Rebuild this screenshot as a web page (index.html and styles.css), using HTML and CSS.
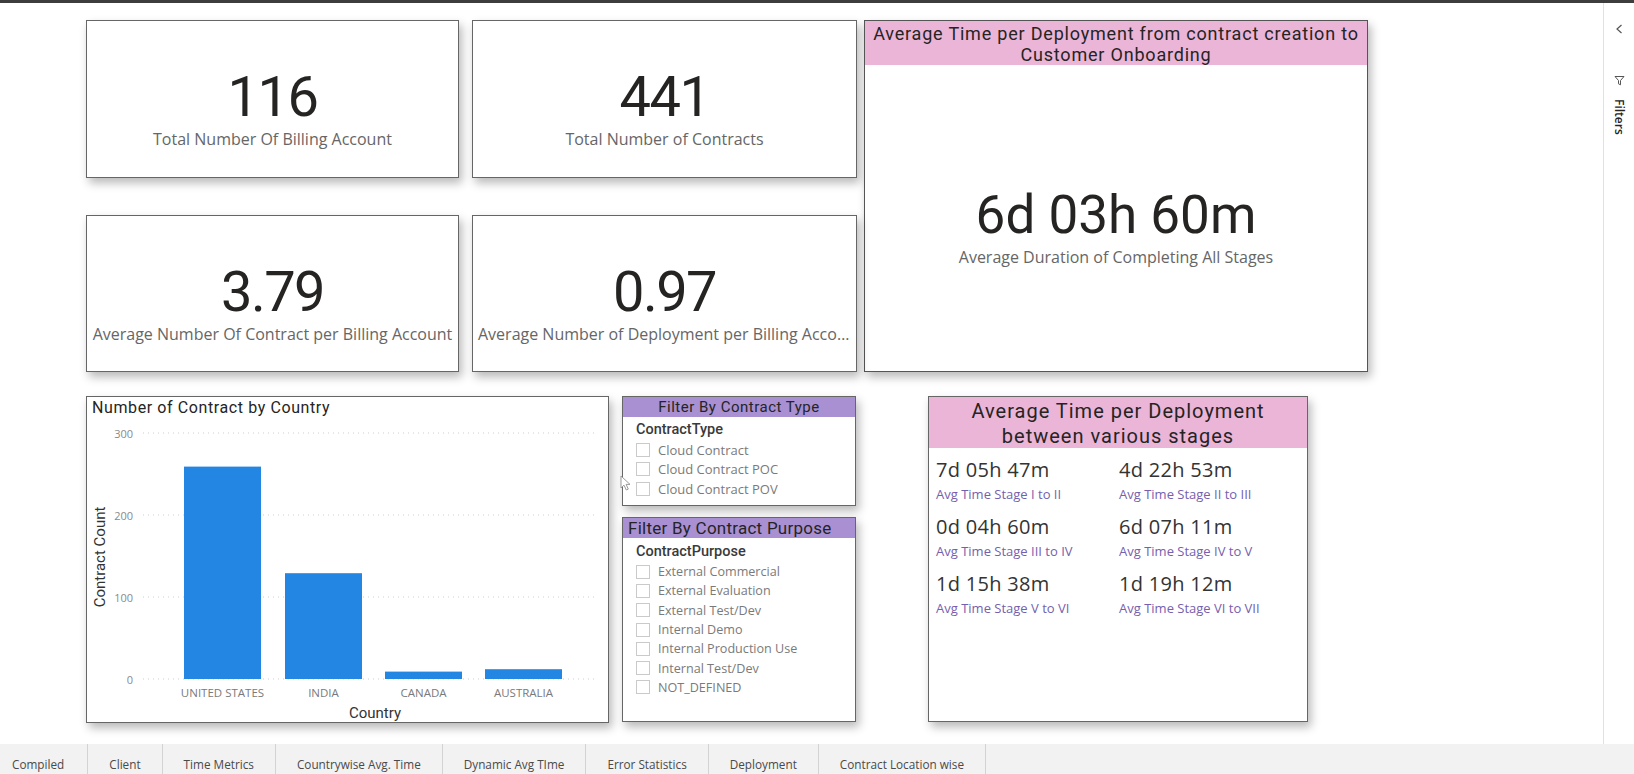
FILE: index.html
```html
<!DOCTYPE html>
<html lang="en">
<head>
<meta charset="utf-8">
<title>Contracts Dashboard</title>
<link rel="stylesheet" href="styles.css">
</head>
<body>
<div class="topbar"></div>
<div class="main">
  <div class="canvas">
    <div class="top-grid">
      <div class="card kpi">
        <div class="kpi-value">116</div>
        <div class="kpi-label">Total Number Of Billing Account</div>
      </div>
      <div class="card kpi">
        <div class="kpi-value">441</div>
        <div class="kpi-label">Total Number of Contracts</div>
      </div>
      <div class="card big">
        <div class="big-head">Average Time per Deployment from contract creation to Customer Onboarding</div>
        <div class="big-body">
          <div class="big-value">6d 03h 60m</div>
          <div class="kpi-label">Average Duration of Completing All Stages</div>
        </div>
      </div>
      <div class="card kpi">
        <div class="kpi-value">3.79</div>
        <div class="kpi-label">Average Number Of Contract per Billing Account</div>
      </div>
      <div class="card kpi">
        <div class="kpi-value">0.97</div>
        <div class="kpi-label">Average Number of Deployment per Billing Account</div>
      </div>
    </div>

    <div class="bottom-row">
      <div class="card chart">
        <div class="chart-title">Number of Contract by Country</div>
        <svg class="chart-svg" width="521" height="303" viewBox="0 0 521 303">
          <g class="grid">
            <line x1="56" y1="14" x2="510" y2="14"/>
            <line x1="56" y1="96" x2="510" y2="96"/>
            <line x1="56" y1="178" x2="510" y2="178"/>
            <line x1="56" y1="260" x2="510" y2="260"/>
          </g>
          <g class="ytick">
            <text x="46" y="14">300</text>
            <text x="46" y="96">200</text>
            <text x="46" y="178">100</text>
            <text x="46" y="260">0</text>
          </g>
          <g class="bars">
            <rect x="97" y="47.6" width="77" height="212.4"/>
            <rect x="198" y="154.2" width="77" height="105.8"/>
            <rect x="298" y="252.6" width="77" height="7.4"/>
            <rect x="398" y="250.2" width="77" height="9.8"/>
          </g>
          <g class="xtick">
            <text x="135.5" y="273">UNITED STATES</text>
            <text x="236.5" y="273">INDIA</text>
            <text x="336.5" y="273">CANADA</text>
            <text x="436.5" y="273">AUSTRALIA</text>
          </g>
          <text class="axis-title" x="288" y="294">Country</text>
          <text class="axis-title" x="13" y="138" transform="rotate(-90 13 138)">Contract Count</text>
        </svg>
      </div>

      <div class="filters">
        <div class="card slicer slicer-type">
          <div class="fhead">Filter By Contract Type</div>
          <div class="ftitle">ContractType</div>
          <div class="fitem"><span class="cb"></span>Cloud Contract</div>
          <div class="fitem"><span class="cb"></span>Cloud Contract POC</div>
          <div class="fitem"><span class="cb"></span>Cloud Contract POV</div>
          <svg class="cursor" width="12" height="16" viewBox="0 0 12 16"><path d="M1 1 L1 13 L4 10.2 L6.3 15 L8.3 14.1 L6.1 9.4 L10 9.4 Z"/></svg>
        </div>
        <div class="card slicer slicer-purpose">
          <div class="fhead fhead-left">Filter By Contract Purpose</div>
          <div class="ftitle ftitle-purpose">ContractPurpose</div>
          <div class="fitem fitem-tight"><span class="cb"></span>External Commercial</div>
          <div class="fitem fitem-tight"><span class="cb"></span>External Evaluation</div>
          <div class="fitem fitem-tight"><span class="cb"></span>External Test/Dev</div>
          <div class="fitem fitem-tight"><span class="cb"></span>Internal Demo</div>
          <div class="fitem fitem-tight"><span class="cb"></span>Internal Production Use</div>
          <div class="fitem fitem-tight"><span class="cb"></span>Internal Test/Dev</div>
          <div class="fitem fitem-tight"><span class="cb"></span>NOT_DEFINED</div>
        </div>
      </div>

      <div class="card stages">
        <div class="shead">Average Time per Deployment between various stages</div>
        <div class="sgrid">
          <div class="scell"><div class="sval">7d 05h 47m</div><div class="slab">Avg Time Stage I to II</div></div>
          <div class="scell"><div class="sval">4d 22h 53m</div><div class="slab">Avg Time Stage II to III</div></div>
          <div class="scell"><div class="sval">0d 04h 60m</div><div class="slab">Avg Time Stage III to IV</div></div>
          <div class="scell"><div class="sval">6d 07h 11m</div><div class="slab">Avg Time Stage IV to V</div></div>
          <div class="scell"><div class="sval">1d 15h 38m</div><div class="slab">Avg Time Stage V to VI</div></div>
          <div class="scell"><div class="sval">1d 19h 12m</div><div class="slab">Avg Time Stage VI to VII</div></div>
        </div>
      </div>
    </div>
  </div>

  <aside class="sidebar">
    <svg class="chev" width="8" height="10" viewBox="0 0 8 10"><polyline points="6.5,1 2,5 6.5,9"/></svg>
    <svg class="funnel" width="11" height="11" viewBox="0 0 11 11"><path d="M1 1.5 H10 L6.5 5.5 V9.8 L4.5 8.8 V5.5 Z"/></svg>
    <div class="filters-label">Filters</div>
  </aside>
</div>

<nav class="tabs">
  <div class="tab tab-first">Compiled</div>
  <div class="tab">Client</div>
  <div class="tab">Time Metrics</div>
  <div class="tab">Countrywise Avg. Time</div>
  <div class="tab">Dynamic Avg TIme</div>
  <div class="tab">Error Statistics</div>
  <div class="tab">Deployment</div>
  <div class="tab">Contract Location wise</div>
</nav>
</body>
</html>
```

FILE: styles.css
```css
* { box-sizing: border-box; }

html, body {
  margin: 0;
  padding: 0;
}

body {
  width: 1634px;
  height: 774px;
  overflow: hidden;
  background: #ffffff;
  font-family: "Open Sans", "Noto Sans", sans-serif;
  color: #252423;
}

.topbar {
  height: 3px;
  background: #3d3d3d;
}

.main {
  display: flex;
  height: 741px;
}

.canvas {
  flex: 1;
  padding: 17px 0 0 86px;
}

/* ---------- cards ---------- */
.card {
  background: #fff;
  border: 1px solid #666;
  box-shadow: 3px 5px 9px rgba(0, 0, 0, 0.28);
}

.top-grid {
  display: grid;
  grid-template-columns: 373px 385px 504px;
  grid-template-rows: 158px 157px;
  column-gap: 13px;
  row-gap: 37px;
}

.kpi {
  display: flex;
  flex-direction: column;
  align-items: center;
  padding-top: 48px;
  overflow: hidden;
}

.kpi-value {
  font-family: "Roboto", sans-serif;
  font-size: 56px;
  line-height: 56px;
  color: #252423;
  letter-spacing: -1.5px;
}

.kpi-label {
  margin-top: 4px;
  font-size: 16px;
  line-height: 21px;
  color: #666;
  max-width: 100%;
  padding: 0 5px;
  white-space: nowrap;
  overflow: hidden;
  text-overflow: ellipsis;
}

.big {
  grid-column: 3;
  grid-row: 1 / span 2;
  width: 504px;
  margin-left: -6px;
  border-color: #555;
}

.big-head {
  height: 44px;
  background: #ebb5d8;
  padding: 2px 4px 0;
  font-family: "Roboto", sans-serif;
  font-size: 18px;
  line-height: 21px;
  letter-spacing: 0.8px;
  text-align: center;
  color: #252423;
}

.big-body {
  display: flex;
  flex-direction: column;
  align-items: center;
  padding-top: 124px;
}

.big-value {
  font-family: "Roboto", sans-serif;
  font-size: 53px;
  line-height: 53px;
  color: #252423;
}

.big-body .kpi-label {
  margin-top: 5px;
}

/* ---------- bottom row ---------- */
.bottom-row {
  display: flex;
  align-items: flex-start;
  margin-top: 24px;
}

.chart {
  width: 523px;
  height: 327px;
}

.chart-title {
  height: 22px;
  padding-left: 5px;
  font-family: "Roboto", sans-serif;
  font-size: 16px;
  line-height: 22px;
  letter-spacing: 0.6px;
  color: #252423;
}

.chart-svg {
  display: block;
}

.grid line {
  stroke: #cfcfcf;
  stroke-width: 1;
  stroke-dasharray: 1 4;
}

.ytick text {
  font-family: "Open Sans", sans-serif;
  font-size: 11px;
  fill: #8a8a8a;
  text-anchor: end;
  dominant-baseline: central;
}

.bars rect {
  fill: #2386e2;
}

.xtick text {
  font-family: "Open Sans", sans-serif;
  font-size: 11.5px;
  fill: #7a7a7a;
  text-anchor: middle;
  dominant-baseline: central;
}

.axis-title {
  font-family: "Roboto", sans-serif;
  font-size: 15px;
  fill: #333;
  text-anchor: middle;
  dominant-baseline: central;
}

.filters {
  display: flex;
  flex-direction: column;
  gap: 11px;
  width: 234px;
  margin-left: 13px;
}

.slicer {
  position: relative;
}

.slicer-type { height: 110px; }
.slicer-purpose { height: 205px; }

.fhead {
  height: 20px;
  background: #a890d3;
  font-family: "Roboto", sans-serif;
  font-size: 15px;
  line-height: 20px;
  letter-spacing: 0.5px;
  text-align: center;
  color: #252423;
  white-space: nowrap;
}

.fhead-left {
  text-align: left;
  padding-left: 5px;
  font-size: 17px;
  letter-spacing: 0.25px;
}

.ftitle {
  margin-top: 3px;
  padding-left: 13px;
  font-family: "Roboto", sans-serif;
  font-weight: 500;
  font-size: 14.5px;
  line-height: 20px;
  color: #3a3a3a;
}

.ftitle-purpose {
  margin-top: 4px;
}

.fitem {
  display: flex;
  align-items: center;
  gap: 8px;
  height: 19.5px;
  padding-left: 13px;
  font-size: 13px;
  color: #7a7a7a;
  white-space: nowrap;
}

.fitem-tight {
  height: 19.3px;
  font-size: 12.6px;
}

.cb {
  width: 14px;
  height: 14px;
  border: 1px solid #cacaca;
  flex: none;
}

.cursor {
  position: absolute;
  left: -3px;
  top: 78px;
}

.cursor path {
  fill: #fff;
  stroke: #9a9a9a;
  stroke-width: 1;
}

.stages {
  width: 380px;
  height: 326px;
  margin-left: 72px;
}

.shead {
  height: 51px;
  background: #ebb5d8;
  padding: 2px 40px 0;
  font-family: "Roboto", sans-serif;
  font-size: 20px;
  line-height: 25px;
  letter-spacing: 1px;
  text-align: center;
  color: #252423;
}

.sgrid {
  display: grid;
  grid-template-columns: 183px 1fr;
  padding: 9px 0 0 7px;
}

.sval {
  font-size: 20px;
  line-height: 26px;
  letter-spacing: 0.3px;
  color: #333;
}

.slab {
  font-size: 13px;
  line-height: 22px;
  color: #7560ae;
  margin-bottom: 9px;
  white-space: nowrap;
}

/* ---------- right pane ---------- */
.sidebar {
  width: 31px;
  border-left: 1px solid #e1e1e1;
  display: flex;
  flex-direction: column;
  align-items: center;
}

.chev {
  margin-top: 21px;
}

.chev polyline {
  fill: none;
  stroke: #555;
  stroke-width: 1.2;
}

.funnel {
  margin-top: 41px;
}

.funnel path {
  fill: none;
  stroke: #555;
  stroke-width: 1;
  stroke-linejoin: round;
}

.filters-label {
  margin-top: 13px;
  writing-mode: vertical-rl;
  font-size: 12px;
  font-weight: 600;
  color: #252423;
}

/* ---------- tabs ---------- */
.tabs {
  display: flex;
  height: 30px;
  background: #f2f2f2;
  overflow: hidden;
}

.tab {
  padding: 10px 21px 0;
  font-size: 11.75px;
  line-height: 20px;
  color: #4a4a4a;
  border-right: 1px solid #d3d3d3;
  white-space: nowrap;
}

.tab-first {
  padding-left: 12px;
  padding-right: 23px;
}
```
